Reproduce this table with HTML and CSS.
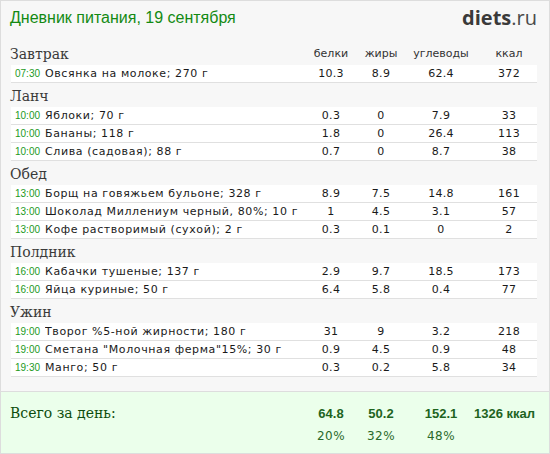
FILE: index.html
```html
<!DOCTYPE html>
<html lang="ru">
<head>
<meta charset="utf-8">
<link rel="stylesheet" href="styles.css">
</head>
<body>
<div class="page">
  <div class="top">
    <h1 class="title">Дневник питания, 19 сентября</h1>
    <div class="logo"><b>diets</b>.ru</div>
  </div>

  <div class="meal">
    <div class="meal-head">
      <span class="meal-name">Завтрак</span>
      <span class="col">белки</span><span class="col">жиры</span><span class="col">углеводы</span><span class="col">ккал</span>
    </div>
    <div class="row"><span class="time">07:30</span><span class="name">Овсянка на молоке; 270 г</span><span class="col">10.3</span><span class="col">8.9</span><span class="col">62.4</span><span class="col">372</span></div>
  </div>

  <div class="meal">
    <div class="meal-head"><span class="meal-name">Ланч</span></div>
    <div class="row"><span class="time">10:00</span><span class="name">Яблоки; 70 г</span><span class="col">0.3</span><span class="col">0</span><span class="col">7.9</span><span class="col">33</span></div>
    <div class="row"><span class="time">10:00</span><span class="name">Бананы; 118 г</span><span class="col">1.8</span><span class="col">0</span><span class="col">26.4</span><span class="col">113</span></div>
    <div class="row"><span class="time">10:00</span><span class="name">Слива (садовая); 88 г</span><span class="col">0.7</span><span class="col">0</span><span class="col">8.7</span><span class="col">38</span></div>
  </div>

  <div class="meal">
    <div class="meal-head"><span class="meal-name">Обед</span></div>
    <div class="row"><span class="time">13:00</span><span class="name">Борщ на говяжьем бульоне; 328 г</span><span class="col">8.9</span><span class="col">7.5</span><span class="col">14.8</span><span class="col">161</span></div>
    <div class="row"><span class="time">13:00</span><span class="name">Шоколад Миллениум черный, 80%; 10 г</span><span class="col">1</span><span class="col">4.5</span><span class="col">3.1</span><span class="col">57</span></div>
    <div class="row"><span class="time">13:00</span><span class="name">Кофе растворимый (сухой); 2 г</span><span class="col">0.3</span><span class="col">0.1</span><span class="col">0</span><span class="col">2</span></div>
  </div>

  <div class="meal">
    <div class="meal-head"><span class="meal-name">Полдник</span></div>
    <div class="row"><span class="time">16:00</span><span class="name">Кабачки тушеные; 137 г</span><span class="col">2.9</span><span class="col">9.7</span><span class="col">18.5</span><span class="col">173</span></div>
    <div class="row"><span class="time">16:00</span><span class="name">Яйца куриные; 50 г</span><span class="col">6.4</span><span class="col">5.8</span><span class="col">0.4</span><span class="col">77</span></div>
  </div>

  <div class="meal">
    <div class="meal-head"><span class="meal-name">Ужин</span></div>
    <div class="row"><span class="time">19:00</span><span class="name">Творог %5-ной жирности; 180 г</span><span class="col">31</span><span class="col">9</span><span class="col">3.2</span><span class="col">218</span></div>
    <div class="row"><span class="time">19:00</span><span class="name">Сметана "Молочная ферма"15%; 30 г</span><span class="col">0.9</span><span class="col">4.5</span><span class="col">0.9</span><span class="col">48</span></div>
    <div class="row"><span class="time">19:30</span><span class="name">Манго; 50 г</span><span class="col">0.3</span><span class="col">0.2</span><span class="col">5.8</span><span class="col">34</span></div>
  </div>

  <div class="total">
    <div class="total-line">
      <span class="total-label">Всего за день:</span>
      <span class="col">64.8</span><span class="col">50.2</span><span class="col">152.1</span><span class="col kcal">1326 ккал</span>
    </div>
    <div class="total-line pct">
      <span class="total-label"></span>
      <span class="col">20%</span><span class="col">32%</span><span class="col">48%</span><span class="col"></span>
    </div>
  </div>
</div>
</body>
</html>
```

FILE: styles.css
```css
* { box-sizing: border-box; }
html, body { margin: 0; padding: 0; }
body { background: #fff; }

.page {
  width: 550px;
  height: 454px;
  background: #f7f7f7;
  border: 1px solid #dddddd;
  display: flex;
  flex-direction: column;
  overflow: hidden;
}

.top {
  height: 40px;
  display: flex;
  justify-content: space-between;
  align-items: flex-start;
  padding: 0 12px 0 9px;
}
.title {
  margin: 6px 0 0;
  font: normal 16px/22px "Liberation Sans", Arial, sans-serif;
  color: #138a13;
}
.logo {
  margin-top: 5px;
  font: 20px/24px "Open Sans", "Liberation Sans", sans-serif;
  color: #4a4a4a;
}
.logo b { font-weight: 700; color: #3a3a3a; }

.meal { padding: 0 12px 0 9px; }
.meal-head {
  display: grid;
  grid-template-columns: 1fr 60px 40px 80px 56px;
  align-items: end;
  height: 24px;
  padding-bottom: 1px;
}
.meal-name {
  font: 14px/20px "DejaVu Serif", Georgia, serif;
  color: #3a3a3a;
}
.meal-head .col {
  font: 11px/16px "DejaVu Sans", Verdana, sans-serif;
  color: #333;
  text-align: center;
  padding-bottom: 2px;
}

.row {
  display: grid;
  grid-template-columns: 30px 1fr 60px 40px 80px 56px;
  align-items: center;
  height: 18px;
  margin-left: 1px;
  background: #fff;
  border-bottom: 1px solid #e0e0e0;
  padding-left: 4px;
  font: 11px/17px "DejaVu Sans", Verdana, sans-serif;
  color: #1a1a1a;
  letter-spacing: 0.6px;
}
.time {
  font: 10px/17px "Liberation Sans", Arial, sans-serif;
  color: #1d9a1d;
  letter-spacing: 0;
}
.name { white-space: nowrap; overflow: hidden; }
.row .col { text-align: center; letter-spacing: 0.3px; }

.total {
  margin-top: auto;
  height: 62px;
  background: #ebffeb;
  border-top: 1px solid #dddddd;
  padding: 11px 12px 0 9px;
}
.total-line {
  display: grid;
  grid-template-columns: 1fr 60px 40px 80px 56px;
  align-items: center;
  height: 22px;
}
.total-label {
  font: 14px/20px "DejaVu Serif", Georgia, serif;
  color: #0d4d0d;
  margin-top: -3px;
}
.total-line .col {
  text-align: center;
  font: bold 13px/20px "Liberation Sans", Arial, sans-serif;
  color: #1e641e;
}
.total-line .kcal { white-space: nowrap; justify-self: end; margin-right: 2px; }
.pct .col {
  font: normal 12px/20px "DejaVu Sans", Verdana, sans-serif;
  color: #2a6a2a;
  letter-spacing: 0.5px;
}
```
